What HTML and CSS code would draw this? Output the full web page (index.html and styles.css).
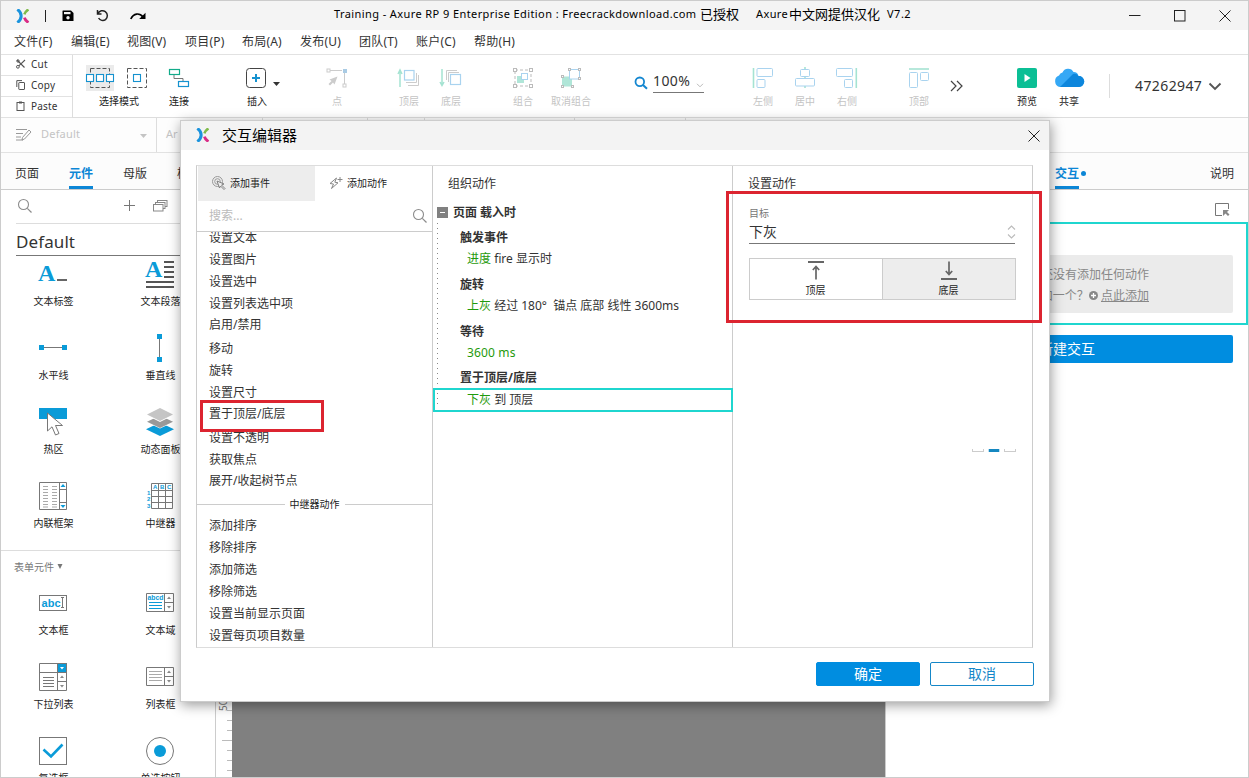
FILE: index.html
```html
<!DOCTYPE html>
<html lang="zh-CN">
<head>
<meta charset="utf-8">
<title>Axure RP 9</title>
<link rel="stylesheet" href="styles.css">
</head>
<body>
<svg class="defs" width="0" height="0">
  <defs>
    <symbol id="logo" viewBox="0 0 14 14"><path d="M1.400 .4C6.400 4.200 6.400 9.800 1.400 13.600" fill="none" stroke="#1a93dd" stroke-width="3"/><path d="M12.400 .4C10.400 1.800 9 3.200 8.400 5.400" fill="none" stroke="#7fbb4a" stroke-width="2.600"/><path d="M8.400 8.600C9 10.800 10.400 12.200 12.400 13.600" fill="none" stroke="#d92c86" stroke-width="2.800"/></symbol>
    <symbol id="search" viewBox="0 0 16 16"><circle cx="6.500" cy="6.500" r="5" fill="none" stroke="#8c8c8c" stroke-width="1.100"/><path d="M10.300 10.300L14.500 14.500" stroke="#8c8c8c" stroke-width="1.200"/></symbol>
    <symbol id="more" viewBox="0 0 13 12"><path d="M1 1L6 6L1 11M7 1L12 6L7 11" fill="none" stroke="#444" stroke-width="1.200"/></symbol>
    <symbol id="close" viewBox="0 0 12 12"><path d="M.5 .5L11.500 11.500M11.500 .5L.5 11.500" stroke="#222" stroke-width="1"/></symbol>
  </defs>
</svg>
<div class="app">
  <header class="titlebar">
    <svg class="tb-logo" width="14" height="14"><use href="#logo"/></svg>
    <i class="tb-bar"></i>
    <svg class="tb-save" width="12" height="12" viewBox="0 0 12 12"><path d="M1 .5H9L11.500 3V11H1Q.5 11 .5 10.500V1Q.5 .5 1 .5Z" fill="#000"/><rect x="2" y="2" width="6.500" height="2.200" fill="#f4f4f4"/><circle cx="6" cy="7.800" r="1.700" fill="#f4f4f4"/></svg>
    <svg class="tb-undo" width="13" height="13" viewBox="0 0 13 13"><path d="M1.500 1V5H5.500M1.800 4.800C3.300 1.500 7 .9 9.300 2.600C12 4.700 12 8.500 9.500 10.600C7.300 12.200 4 11.600 2.600 9" fill="none" stroke="#222" stroke-width="1.500"/></svg>
    <svg class="tb-redo" width="16" height="8" viewBox="0 0 16 8"><path d="M.8 7C3.500 1 9.500 .5 13 5" fill="none" stroke="#000" stroke-width="1.700"/><path d="M15.500 .8V7H9.200Z" fill="#000"/></svg>
    <div class="tb-title"><span class="t1">Training - Axure RP 9 Enterprise Edition : Freecrackdownload.com</span><span class="t2">已授权</span><span class="t3">Axure</span><span class="t4">中文网提供汉化</span><span class="t5">V7.2</span></div>
    <div class="win">
      <svg width="12" height="12" viewBox="0 0 12 12"><path d="M0 5.500H11.500" stroke="#222"/></svg>
      <svg width="12" height="12" viewBox="0 0 12 12"><rect x=".5" y=".5" width="10.500" height="10.500" fill="none" stroke="#222"/></svg>
      <svg width="12" height="12"><use href="#close"/></svg>
    </div>
  </header>
  <nav class="menubar"><span>文件(F)</span><span>编辑(E)</span><span>视图(V)</span><span>项目(P)</span><span>布局(A)</span><span>发布(U)</span><span>团队(T)</span><span>账户(C)</span><span>帮助(H)</span></nav>
  <section class="toolbar">
    <div class="clip">
      <div><svg width="10" height="10" viewBox="0 0 10 10"><path d="M1 1L8.500 8.500M9 1L2.800 6.800" stroke="#555" stroke-width="1.100"/><circle cx="1.900" cy="7.800" r="1.400" fill="none" stroke="#555"/><circle cx="2" cy="2" r="1.200" fill="none" stroke="#555"/></svg>Cut</div>
      <div><svg width="10" height="10" viewBox="0 0 10 10"><path d="M.8 7V.6H6" fill="none" stroke="#555"/><rect x="2.800" y="2.500" width="5.700" height="7" rx=".5" fill="none" stroke="#555"/></svg>Copy</div>
      <div><svg width="10" height="10" viewBox="0 0 10 10"><rect x="1" y="1.500" width="7" height="8" fill="none" stroke="#555"/><path d="M3 1.500H6" stroke="#555" stroke-width="2"/></svg>Paste</div>
    </div>
    <div class="tool sel"><svg width="64" height="26" viewBox="0 0 64 26"><rect width="28" height="26" fill="#ebebeb"/><rect x="4.500" y="3.500" width="19" height="19" fill="none" stroke="#555" stroke-dasharray="4 2"/><g fill="#fff" stroke="#1592cf" stroke-width="1.100"><rect x=".5" y="9.500" width="7" height="7"/><rect x="10.500" y="9.500" width="7" height="7"/><rect x="20.500" y="9.500" width="7" height="7"/></g><rect x="41.500" y="3.500" width="19" height="19" fill="none" stroke="#555" stroke-dasharray="4 2"/><rect x="47.500" y="9.500" width="7" height="7" fill="none" stroke="#1592cf" stroke-width="1.100"/></svg><b>选择模式</b></div>
    <div class="tool"><svg width="22" height="22" viewBox="0 0 22 22"><path d="M6 8V11.500H15V14" fill="none" stroke="#777"/><rect x="1.500" y="2.500" width="10" height="5" fill="none" stroke="#12ab8a" stroke-width="1.200"/><rect x="10.500" y="14.500" width="10" height="5" fill="none" stroke="#1592cf" stroke-width="1.200"/></svg><b>连接</b></div>
    <div class="tool ins"><svg width="22" height="22" viewBox="0 0 22 22"><rect x=".5" y="1.500" width="19" height="19" rx="3" fill="none" stroke="#444"/><path d="M10 7V15M6 11H14" stroke="#1592cf" stroke-width="2"/><path d="M27 15H34L30.500 19Z" fill="#333"/></svg><b>插入</b></div>
    <div class="tool off pt"><svg width="22" height="22" viewBox="0 0 22 22"><path d="M4 3.500H16M18.500 6V17" stroke="#ccc"/><rect x="1" y="2" width="3" height="3" fill="none" stroke="#ccc"/><rect x="17" y="2" width="4" height="4" fill="#a9cbe4"/><rect x="17" y="17" width="3" height="3" fill="none" stroke="#ccc"/><path d="M11.500 9.500L3.500 12.500L5.500 14L2.500 17L4 18.500L7 15.500L8.500 17.500Z" fill="#ccc"/></svg><b>点</b></div>
    <div class="tool off top"><svg width="22" height="22" viewBox="0 0 22 22"><path d="M2 20V4M0 7L2 3L4 7" fill="none" stroke="#a5e3d2" stroke-width="1.500"/><path d="M20.500 8V18.500H10M18.500 6V15.500H8" fill="none" stroke="#ccc"/><rect x="6.500" y="3.500" width="9.500" height="9.500" fill="#fff" stroke="#a9d3ef" stroke-width="1.200"/></svg><b>顶层</b></div>
    <div class="tool off"><svg width="22" height="22" viewBox="0 0 22 22"><path d="M2 2V18M0 15L2 18.500L4 15" fill="none" stroke="#a5e3d2" stroke-width="1.500"/><path d="M6.500 13V3.500H17M8.500 15V5.500H19" fill="none" stroke="#ccc"/><rect x="10.500" y="7.500" width="10" height="10" fill="#fff" stroke="#a9d3ef" stroke-width="1.200"/></svg><b>底层</b></div>
    <div class="tool wide off grp"><svg width="22" height="22" viewBox="0 0 22 22"><rect x="3" y="3" width="16" height="16" fill="none" stroke="#bbb" stroke-dasharray="3 2"/><g fill="#fff" stroke="#bbb"><rect x="1.500" y="1.500" width="3" height="3"/><rect x="17.500" y="1.500" width="3" height="3"/><rect x="1.500" y="17.500" width="3" height="3"/><rect x="17.500" y="17.500" width="3" height="3"/></g><rect x="5" y="9" width="7" height="7" fill="#b0e6d8"/><rect x="9.500" y="6.500" width="6" height="6" fill="#fff" stroke="#a9d3ef"/></svg><b>组合</b></div>
    <div class="tool wide off"><svg width="22" height="22" viewBox="0 0 22 22"><rect x="2" y="9.500" width="10" height="10" fill="#b0e6d8"/><rect x="9.500" y="2.500" width="10" height="9.500" fill="#fff" stroke="#a9d3ef"/><g fill="#fff" stroke="#bbb"><rect x="8.500" y="1.500" width="2" height="2"/><rect x="18.500" y="1.500" width="2" height="2"/><rect x="18.500" y="10.500" width="2" height="2"/><rect x="1.500" y="8.500" width="2" height="2"/><rect x="1.500" y="18.500" width="2" height="2"/><rect x="11.500" y="18.500" width="2" height="2"/></g></svg><b>取消组合</b></div>
    <div class="zoom"><svg width="14" height="14" viewBox="0 0 14 14"><circle cx="5.800" cy="5.800" r="4.300" fill="none" stroke="#1587d0" stroke-width="1.800"/><path d="M9 9L13 12.800" stroke="#1587d0" stroke-width="2"/></svg><div class="zoomval"><span>100%</span><svg width="8" height="5" viewBox="0 0 8 5"><path d="M1 .8L4 3.800L7 .8" fill="none" stroke="#bbb"/></svg></div></div>
    <div class="tool off al"><svg width="22" height="22" viewBox="0 0 22 22"><path d="M1.500 1V21" stroke="#a5e3d2" stroke-width="1.600"/><g fill="none" stroke="#a9d3ef"><rect x="5" y="1.500" width="15.500" height="8" rx="1"/><rect x="5" y="12.500" width="8" height="8" rx="1"/></g></svg><b>左侧</b></div>
    <div class="tool off"><svg width="22" height="22" viewBox="0 0 22 22"><path d="M11 0V3M11 9V12M11 19V21" stroke="#a5e3d2" stroke-width="1.600"/><g fill="none" stroke="#a9d3ef"><rect x="6.500" y="2.500" width="9" height="7" rx="1"/><rect x="1.500" y="11.500" width="19" height="7.500" rx="1"/></g></svg><b>居中</b></div>
    <div class="tool off"><svg width="22" height="22" viewBox="0 0 22 22"><path d="M20.300 1V21" stroke="#a5e3d2" stroke-width="1.600"/><g fill="none" stroke="#a9d3ef"><rect x=".5" y="1.500" width="16" height="8" rx="1"/><rect x="8.500" y="12.500" width="8" height="8" rx="1"/></g></svg><b>右侧</b></div>
    <div class="tool off at"><svg width="22" height="22" viewBox="0 0 22 22"><path d="M1 2H21" stroke="#a5e3d2" stroke-width="1.600"/><g fill="none" stroke="#a9d3ef"><rect x="1.500" y="5.500" width="8" height="15" rx="1"/><rect x="12.500" y="5.500" width="8" height="8" rx="1"/></g></svg><b>顶部</b></div>
    <svg class="more1" width="13" height="12"><use href="#more"/></svg>
    <div class="tool pv"><svg width="22" height="22" viewBox="0 0 22 22"><rect x="1" y="1" width="20" height="20" rx="2" fill="#0bbf95"/><path d="M8.500 7L14.500 11L8.500 15Z" fill="#fff"/></svg><b>预览</b></div>
    <div class="tool"><svg width="30" height="22" viewBox="0 0 30 22"><path d="M6 20A6 6 0 0 1 5 8.500A5 5 0 0 1 8.500 5.500A6 6 0 0 1 19.500 5A5 5 0 0 1 24.500 9A5.500 5.500 0 0 1 25 20Z" fill="#35a8f5"/><path d="M6 20L19 7A5 5 0 0 1 24.500 9A5.500 5.500 0 0 1 25 20Z" fill="#0d86dc"/></svg><b>共享</b></div>
    <i class="tdiv"></i>
    <div class="account"><span>47262947</span><svg width="14" height="9" viewBox="0 0 14 9"><path d="M1.500 1.500L7 7L12.500 1.500" fill="none" stroke="#555" stroke-width="1.900"/></svg></div>
  </section>
  <section class="format">
    <div class="style"><svg width="16" height="13" viewBox="0 0 16 13"><path d="M0 1.500H11M0 5.500H7M0 9H5M0 12H7" stroke="#999"/><path d="M6.500 9.500L13 2L15 4L8.500 11L6 12Z" fill="none" stroke="#999"/></svg><span>Default</span><svg class="caret" width="7" height="4" viewBox="0 0 7 4"><path d="M0 0H7L3.500 4Z" fill="#c4c4c4"/></svg></div>
    <div class="f1">Ar</div><i class="f2"></i><i class="f3"></i><i class="f4"></i><i class="f5"></i><i class="f6"></i>
    <i class="fline"></i><span class="h">H</span>
    <svg class="eye" width="15" height="10" viewBox="0 0 15 10"><path d="M.7 5Q7.500 -4 14.300 5Q7.500 14 .7 5Z" fill="none" stroke="#ddd"/><circle cx="7.500" cy="5" r="2.300" fill="none" stroke="#ddd"/></svg>
    <svg class="more2" width="13" height="12"><use href="#more"/></svg>
  </section>
  <main class="work">
    <aside class="left">
      <div class="tabs"><span>页面</span><span class="on">元件</span><span>母版</span><span>样式</span></div>
      <div class="lsearch"><svg width="16" height="16"><use href="#search"/></svg><svg class="plus" width="11" height="11" viewBox="0 0 11 11"><path d="M5.500 0V11M0 5.500H11" stroke="#777"/></svg><svg width="15" height="12" viewBox="0 0 15 12"><g fill="#fff" stroke="#888"><rect x="4.500" y=".5" width="9.500" height="6"/><rect x="2.500" y="2.500" width="9.500" height="6"/><rect x=".5" y="4.500" width="9.500" height="6.500"/></g></svg></div>
      <h2>Default</h2>
      <div class="lib g1">
        <div><svg width="28" height="28" viewBox="0 0 28 28"><text x="-1" y="21" class="serifa">A</text><path d="M18 20H28" stroke="#666" stroke-width="2"/></svg><b>文本标签</b></div>
        <div><svg width="28" height="28" viewBox="0 0 28 28"><text x="-1" y="17" class="serifa">A</text><path d="M18 2H28M18 7H28M18 12H28M18 17H28M0 22H28M0 27H28" stroke="#555" stroke-width="2"/></svg><b>文本段落</b></div>
        <div><svg width="28" height="28" viewBox="0 0 28 28"><path d="M2 13.500H26" stroke="#777"/><path d="M0 11H5V16H0ZM23 11H28V16H23Z" fill="#0a9bd8"/></svg><b>水平线</b></div>
        <div><svg width="28" height="28" viewBox="0 0 28 28"><path d="M13.500 2V26" stroke="#777"/><path d="M11 0H16V5H11ZM11 23H16V28H11Z" fill="#0a9bd8"/></svg><b>垂直线</b></div>
        <div><svg width="28" height="28" viewBox="0 0 28 28"><rect width="28" height="11" fill="#0a9bd8"/><path d="M8.500 5V23L13 18.800L16.500 27L20 25.500L16.500 17.500H23.500Z" fill="#fff" stroke="#777"/></svg><b>热区</b></div>
        <div><svg width="28" height="28" viewBox="0 0 28 28"><path d="M14 14.500L28 21.300L14 28L0 21.300Z" fill="#0a9bd8"/><path d="M14 7.500L28 14L14 20.500L0 14Z" fill="#fff"/><path d="M14 7.500L27 13.700L14 20L1 13.700Z" fill="#999"/><path d="M14 0L28 7L14 14L0 7Z" fill="#fff"/><path d="M14 0L27 6.500L14 13L1 6.500Z" fill="#c5c5c5"/></svg><b>动态面板</b></div>
        <div><svg width="28" height="28" viewBox="0 0 28 28"><path d="M.5 .5H27.500V27.500H.5ZM20.500 .5V27.500M20.500 7.500H27.500M20.500 20.500H27.500" fill="none" stroke="#777"/><path d="M21.500 5L24 2L26.500 5ZM21.500 23L24 26L26.500 23Z" fill="#0a9bd8"/><path d="M4 4.500H18M4 7.500H18M4 10.500H18M4 13.500H18M4 16.500H18M4 19.500H18M4 22.500H18M4 25H18" stroke="#aaa" stroke-dasharray="5 4"/></svg><b>内联框架</b></div>
        <div><svg width="28" height="28" viewBox="0 0 28 28"><path d="M5.500 1.500H26.500V26.500H5.500ZM12.500 1.500V26.500M19.500 1.500V26.500M5.500 8.500H26.500M5.500 14.500H26.500M5.500 20.500H26.500" fill="none" stroke="#777"/><g class="mini"><text x="7" y="7">A</text><text x="14" y="7">B</text><text x="21" y="7">C</text><text x="1" y="13">1</text><text x="1" y="19">2</text><text x="1" y="26">3</text></g></svg><b>中继器</b></div>
      </div>
      <h3>表单元件<svg width="6" height="5" viewBox="0 0 6 5"><path d="M.5 0H5.500L3 5Z" fill="#777"/></svg></h3>
      <div class="lib g2">
        <div><svg width="28" height="28" viewBox="0 0 28 28"><rect x=".5" y="6.500" width="27" height="15" fill="none" stroke="#777"/><text x="2.500" y="18" class="abc" textLength="19">abc</text><path d="M22 8.500H25M23.500 8.500V18.500M22 18.500H25" stroke="#777"/></svg><b>文本框</b></div>
        <div><svg width="28" height="28" viewBox="0 0 28 28"><path d="M.5 4.500H27.500V22.500H.5ZM18.500 4.500V22.500M18.500 13.500H27.500" fill="none" stroke="#777"/><text x="1.500" y="11" class="abcd" textLength="16" lengthAdjust="spacingAndGlyphs">abcd</text><path d="M3 13.500H16M3 16.500H16M3 19.500H16" stroke="#0a9bd8"/><path d="M21 10L23 7.500L25 10ZM21 17L23 19.500L25 17Z" fill="#888"/></svg><b>文本域</b></div>
        <div><svg width="28" height="28" viewBox="0 0 28 28"><rect x="18" y="0" width="10" height="9" fill="#0a9bd8"/><path d="M.5 .5H27.500V27.500H.5ZM.5 9.500H27.500M18.500 .5V27.500M18.500 18.500H27.500" fill="none" stroke="#777"/><path d="M21 4H25L23 6.500Z" fill="#fff"/><path d="M4 14.500H15M4 17.500H15M4 20.500H15M4 23.500H15" stroke="#777"/><path d="M21 15L23 12.500L25 15ZM21 22L23 24.500L25 22Z" fill="#888"/></svg><b>下拉列表</b></div>
        <div><svg width="28" height="28" viewBox="0 0 28 28"><path d="M.5 4.500H27.500V22.500H.5ZM18.500 4.500V22.500M18.500 13.500H27.500" fill="none" stroke="#777"/><path d="M3 8.500H16M3 11.500H16M3 14.500H16M3 17.500H16" stroke="#aaa"/><path d="M21 10L23 7.500L25 10ZM21 17L23 19.500L25 17Z" fill="#888"/></svg><b>列表框</b></div>
        <div><svg width="28" height="28" viewBox="0 0 28 28"><rect x=".5" y=".5" width="27" height="27" fill="none" stroke="#777"/><path d="M4.500 12.500L12 19.500L23.500 7.500" fill="none" stroke="#0a9bd8" stroke-width="2.600"/></svg><b>复选框</b></div>
        <div><svg width="28" height="28" viewBox="0 0 28 28"><circle cx="14" cy="14" r="13.500" fill="none" stroke="#777"/><circle cx="14" cy="14" r="6" fill="#0a9bd8"/></svg><b>单选按钮</b></div>
      </div>
    </aside>
    <div class="ruler"><span>500</span></div>
    <div class="canvas"></div>
    <aside class="right">
      <div class="tabs"><span class="on">交互</span><i></i><span class="note">说明</span></div>
      <div class="rpick"><svg width="15" height="14" viewBox="0 0 15 14"><path d="M7 12.500H.5V.5H13.500V6" fill="none" stroke="#777"/><path d="M8 7H14L12 9L14.500 11.500L13 13L10.500 10.500L8 13Z" fill="#888"/></svg></div>
      <div class="case"><div class="empty"><p>还没有添加任何动作</p><p>添加一个？<svg width="9" height="9" viewBox="0 0 9 9"><circle cx="4.500" cy="4.500" r="4.500" fill="#888"/><path d="M4.500 2V7M2 4.500H7" stroke="#fff" stroke-width="1.300"/></svg> <u>点此添加</u></p></div></div>
      <div class="newbtn">新建交互</div>
    </aside>
  </main>

  <div class="dialog">
    <div class="dhead"><svg width="14" height="14"><use href="#logo"/></svg><span>交互编辑器</span><svg class="x" width="12" height="12"><use href="#close"/></svg></div>
    <div class="dbody">
      <div class="c1">
        <div class="dtabs"><div class="act"><svg width="14" height="14" viewBox="0 0 14 14"><circle cx="5.500" cy="5.500" r="5" fill="none" stroke="#999"/><circle cx="5.500" cy="5.500" r="2.800" fill="none" stroke="#999"/><path d="M5 5L12 8L9.500 9L13 12.500L12 13.500L8.500 10L7.500 12Z" fill="#eee" stroke="#777" stroke-width=".9"/></svg>添加事件</div><div><svg width="14" height="14" viewBox="0 0 14 14"><path d="M7.500 2L1 7.500L4.500 8L2.500 12.500L9 6.800L5.800 6.200Z" fill="none" stroke="#888"/><path d="M11 1V6M8.500 3.500H13.500" stroke="#888"/></svg>添加动作</div></div>
        <div class="dsearch"><span>搜索...</span><svg width="16" height="16"><use href="#search"/></svg></div>
        <div class="list">
          <p>设置文本</p><p>设置图片</p><p>设置选中</p><p>设置列表选中项</p><p class="s">启用/禁用</p><p>移动</p><p>旋转</p><p>设置尺寸</p><p class="s">置于顶层/底层</p><p>设置不透明</p><p>获取焦点</p><p class="s">展开/收起树节点</p>
          <div class="sep">中继器动作</div>
          <p>添加排序</p><p>移除排序</p><p>添加筛选</p><p>移除筛选</p><p>设置当前显示页面</p><p>设置每页项目数量</p>
        </div>
      </div>
      <div class="c2">
        <div class="ctitle">组织动作</div>
        <div class="root"><i></i><span>页面 载入时</span></div>
        <div class="tree">
          <div class="n a1">触发事件</div><div class="v b1"><em>进度</em> fire 显示时</div>
          <div class="n a2">旋转</div><div class="v b2"><em>上灰</em> 经过 180°&nbsp; 锚点 底部 线性 3600ms</div>
          <div class="n a2">等待</div><div class="v b3"><em>3600 ms</em></div>
          <div class="n a4">置于顶层/底层</div><div class="v cur"><em>下灰</em> 到 顶层</div>
        </div>
      </div>
      <div class="c3">
        <div class="ctitle">设置动作</div>
        <label>目标</label>
        <div class="target"><span>下灰</span><svg width="9" height="14" viewBox="0 0 9 14"><path d="M1 4.500L4.500 1L8 4.500M1 9.500L4.500 13L8 9.500" fill="none" stroke="#bbb" stroke-width="1.100"/></svg></div>
        <div class="seg"><div><svg width="16" height="19" viewBox="0 0 16 19"><path d="M0 1H16" stroke="#666" stroke-width="2"/><path d="M8 18.500V6M4.800 9L8 5.500L11.200 9" fill="none" stroke="#666" stroke-width="1.700"/></svg>顶层</div><div class="act"><svg width="16" height="19" viewBox="0 0 16 19"><path d="M0 18H16" stroke="#666" stroke-width="2"/><path d="M8 .5V13M4.800 10L8 13.500L11.200 10" fill="none" stroke="#666" stroke-width="1.700"/></svg>底层</div></div>
        <div class="bits"><i></i><i class="on"></i><i></i></div>
      </div>
    </div>
    <div class="dfoot"><button class="ok">确定</button><button>取消</button></div>
    <div class="mark m1"></div>
    <div class="mark m2"></div>
  </div>
</div>
</body>
</html>
```
FILE: styles.css
```css
* { box-sizing: border-box; margin: 0; padding: 0; }
body { width: 1249px; height: 778px; overflow: hidden; font: 12px/16px "Noto Sans", "Noto Sans CJK SC", sans-serif; color: #333; background: #fff; }
i, em { font-style: normal; }
svg { display: block; flex: none; overflow: visible; }
.defs { position: absolute; }
.app { position: relative; display: flex; flex-direction: column; width: 1249px; height: 778px; border: 1px solid #ccc; overflow: hidden; background: #fff; }

.titlebar { display: flex; align-items: center; flex: none; height: 29px; background: #f4f4f4; color: #000; }
.tb-logo { margin-left: 15px; }
.tb-bar { width: 1px; height: 12px; margin-left: 15px; background: #222; }
.tb-save { margin-left: 16px; }
.tb-undo { margin-left: 22px; }
.tb-redo { margin-left: 21px; }
.tb-title { display: flex; align-items: center; margin-left: 188px; width: 580px; white-space: nowrap; font-size: 11px; line-height: 16px; height: 18px; margin-bottom: 3px; }
.t1 { width: 366px; letter-spacing: .41px; }
.t2 { width: 56px; font-size: 13px; }
.t3 { width: 33px; letter-spacing: .4px; }
.t4 { width: 98px; font-size: 13px; }
.t5 { letter-spacing: .5px; }
.win { display: flex; gap: 33px; margin-left: auto; margin-right: 17px; }

.menubar { display: flex; flex: none; height: 25px; padding-left: 13px; border-bottom: 1px solid #e2e2e2; line-height: 24px; }
.menubar span { width: 57px; white-space: nowrap; letter-spacing: .2px; }
.menubar span:nth-child(2) { width: 56px; }
.menubar span:nth-child(3), .menubar span:nth-child(5) { width: 58px; }
.menubar span:nth-child(6) { width: 59px; }
.menubar span:nth-child(8) { width: 58px; }

.toolbar { display: flex; flex: none; height: 63px; border-bottom: 1px solid #ddd; }
.clip { width: 72px; border-right: 1px solid #ddd; font-size: 10px; }
.clip div { display: flex; align-items: center; gap: 5px; height: 21px; padding: 0 0 3px 15px; border-bottom: 1px solid #e2e2e2; letter-spacing: .2px; }
.tool { display: flex; flex-direction: column; align-items: center; flex: none; width: 42px; padding-top: 12px; white-space: nowrap; }
.tool svg { margin-bottom: 5px; }
.tool b { font-weight: 400; font-size: 10px; line-height: 14px; color: #222; }
.tool.off b { color: #c4c4c4; }
.sel { width: 78px; margin-left: 7px; padding-top: 10px; }
.tool.sel svg { margin-bottom: 3px; margin-right: 2px; }
.ins { margin-left: 36px; }
.pt { margin-left: 38px; }
.top { margin-left: 30px; }
.wide { width: 48px; }
.grp { margin-left: 27px; }
.zoom { display: flex; align-items: flex-start; width: 70px; margin-left: 39px; padding-top: 15px; flex: none; }
.zoom > svg { margin-top: 6px; }
.zoomval { display: flex; width: 51px; height: 23px; margin-left: 5px; border-bottom: 1px solid #777; font-size: 14px; line-height: 22px; letter-spacing: .4px; justify-content: space-between; }
.zoomval svg { margin-top: 13px; }
.al { margin-left: 38px; }
.at { margin-left: 30px; }
.more1 { margin: 25px 0 0 10px; }
.pv { margin-left: 43px; }
.tdiv { width: 1px; height: 24px; margin: 19px 0 0 19px; background: #ddd; }
.account { display: flex; align-items: center; gap: 6px; height: 24px; margin: 19px 0 0 25px; font-size: 14px; letter-spacing: .4px; }

.format { display: flex; align-items: center; flex: none; height: 35px; border-bottom: 1px solid #e2e2e2; background: #fdfdfd; color: #c4c4c4; font-size: 11px; }
.style { display: flex; align-items: center; width: 156px; height: 34px; padding: 0 0 2px 15px; border-right: 1px solid #ddd; }
.style span { margin-left: 9px; letter-spacing: .2px; }
.style .caret { margin: 4px 9px 0 auto; }
.f1 { width: 105px; padding: 0 0 2px 9px; }
.format .f2, .format .f3, .format .f4, .format .f5, .format .f6 { height: 34px; border-left: 1px solid #ddd; }
.f2 { width: 105px; } .f3 { width: 57px; } .f4 { width: 150px; } .f5 { width: 111px; } .f6 { width: 170px; }
.fline { width: 52px; height: 18px; border-bottom: 1px solid #bbb; }
.h { margin-left: 1px; width: 18px; font-size: 9px; color: #333; }
.more2 { margin-left: 17px; }

.work { display: flex; flex: 1; min-height: 0; }
.left { width: 215px; border-right: 1px solid #ccc; flex: none; overflow: hidden; }
.tabs { display: flex; height: 37px; border-bottom: 1px solid #ccc; background: #fcfcfc; line-height: 42px; }
.tabs span { height: 36px; white-space: nowrap; }
.tabs .on { color: #0c86d6; font-weight: 700; border-bottom: 3px solid #0c86d6; }
.left .tabs { gap: 30px; padding-left: 14px; }
.lsearch { display: flex; align-items: center; height: 34px; margin-left: 15px; padding: 0 0 2px 1px; border-bottom: 1px solid #ddd; }
.lsearch .plus { margin: 0 18px 0 91px; }
h2 { height: 32px; margin-left: 15px; border-bottom: 1px solid #777; font-weight: 400; font-size: 17px; line-height: 36px; letter-spacing: .1px; }
.lib { display: grid; grid-template-columns: 107px 107px; grid-auto-rows: 74px; margin-left: -1px; }
.lib div { display: flex; flex-direction: column; align-items: center; padding-top: 4px; white-space: nowrap; }
.lib svg { margin-right: 2px; }
.g1 { height: 295px; border-bottom: 1px solid #ddd; }
.lib b { margin-top: 6px; font-weight: 400; font-size: 10px; line-height: 15px; color: #222; }
.serifa { font: 700 24px "Liberation Serif", serif; fill: #0a9bd8; }
.mini { font: 700 6px "Liberation Sans", sans-serif; fill: #0a9bd8; }
.abc { font: 700 11px "Liberation Sans", sans-serif; fill: #0a9bd8; }
.abcd { font: 700 7px "Liberation Sans", sans-serif; fill: #0a9bd8; }
h3 { display: flex; gap: 3px; height: 34px; padding: 8px 0 0 13px; font-weight: 400; font-size: 10px; color: #777; }
h3 svg { margin-top: 5px; }
.ruler { width: 16px; flex: none; padding-top: 512px; background: linear-gradient(#bbb, #bbb) 6px 587px / 10px 1px no-repeat, repeating-linear-gradient(transparent 0 7px, #bbb 7px 8px, transparent 8px 10px) 11px 0 / 5px 100% no-repeat, #fff; color: #777; }
.ruler span { display: block; height: 46px; writing-mode: vertical-rl; transform: rotate(180deg); font: 10px/14px "Noto Sans", sans-serif; }
.canvas { width: 653px; flex: none; background: #808080; }
.right { flex: 1; border-left: 1px solid #ccc; }
.right .tabs { padding: 0 14px 0 169px; }
.right .tabs i { width: 5px; height: 5px; margin: 18px 0 0 2px; border-radius: 50%; background: #0c86d6; }
.right .tabs .note { margin-left: auto; }
.rpick { display: flex; justify-content: flex-end; height: 32px; padding: 13px 18px 0 0; }
.case { height: 103px; padding: 31px 13px 10px 14px; border: 2px solid #1fd6cf; }
.empty { height: 58px; padding: 9px 84px 0 0; background: #ebebeb; border-radius: 2px; text-align: right; color: #888; line-height: 21px; }
.empty svg { display: inline-block; vertical-align: 0; }
.newbtn { height: 28px; margin: 10px 15px 0 14px; background: #008de0; border-radius: 2px; color: #fff; font-size: 14px; line-height: 28px; padding-left: 139px; }

.dialog { position: absolute; left: 179px; top: 119px; width: 870px; height: 582px; border: 1px solid #ccc; background: #fff; box-shadow: 1px 3px 12px rgba(0, 0, 0, .4); }
.dhead { display: flex; align-items: center; height: 29px; padding: 0 9px 0 15px; background: #f3f3f3; color: #000; font-size: 15px; }
.dhead > svg:first-child { margin-bottom: 1px; }
.dhead span { margin: 0 0 2px 12px; }
.dhead .x { margin-left: auto; }
.dbody { display: flex; width: 837px; height: 483px; margin: 15px 0 0 15px; border: 1px solid #ddd; border-left-color: #ccc; border-right-color: #ccc; }
.c1 { width: 236px; flex: none; border-right: 1px solid #ccc; overflow: hidden; }
.dtabs { display: flex; height: 35px; padding-left: 1px; font-size: 10px; }
.dtabs div { display: flex; align-items: center; gap: 4px; width: 117px; padding: 0 0 2px 14px; color: #222; }
.dtabs .act { background: #ededed; }
.dsearch { display: flex; align-items: center; justify-content: space-between; height: 31px; padding: 0 4px 0 12px; border-bottom: 1px solid #ccc; color: #bbb; }
.list { height: 415px; overflow: hidden; }
.list p { height: 22px; padding-left: 12px; line-height: 22px; }
.list p:first-child { margin-top: -5px; }
.list .s { margin-top: -1px; margin-bottom: 2px; }
.list .sep { display: flex; align-items: center; gap: 5px; height: 22px; margin: -1px 0 0; font-size: 10px; color: #222; }
.sep::before, .sep::after { content: ""; flex: 1; height: 1px; background: #ccc; }
.c2 { width: 300px; flex: none; border-right: 1px solid #ccc; }
.ctitle { height: 35px; padding-left: 15px; line-height: 35px; }
.root { display: flex; align-items: center; gap: 5px; height: 22px; padding-left: 4px; font-weight: 700; }
.root span { padding-top: 2px; }
.root i { width: 11px; height: 11px; background: linear-gradient(#fff, #fff) center / 5px 1px no-repeat #808080; }
.tree { height: 189px; background: repeating-linear-gradient(#888 0 1px, transparent 1px 5px) 4px 0 / 1px 182px no-repeat; }
.n { height: 22px; padding-left: 27px; font-weight: 700; line-height: 24px; }
.v { height: 22px; padding-left: 34px; line-height: 22px; white-space: pre; }
.v em { color: #1f9a0d; }
.b3 { letter-spacing: .15px; }
.a1 { padding-top: 3px; height: 25px; }
.a2 { margin-top: 3px; }
.a4 { margin-top: 2px; line-height: 23px; }
.cur { height: 24px; border: 2px solid #1fd6cf; padding-left: 32px; line-height: 20px; margin-right: -1px; }
.c3 { flex: 1; }
.c3 label { display: block; margin-top: 4px; padding-left: 16px; font-size: 10px; color: #777; }
.target { display: flex; justify-content: space-between; align-items: center; width: 266px; height: 23px; margin-left: 16px; border-bottom: 1px solid #777; font-size: 14px; }
.target svg { margin-right: -1px; }
.seg { display: flex; width: 267px; height: 42px; margin: 14px 0 0 16px; border: 1px solid #ccc; font-size: 10px; line-height: 14px; color: #222; }
.seg div { display: flex; flex-direction: column; align-items: center; gap: 3px; flex: 1; padding: 2px 1px 0 0; }
.seg .act { background: #ededed; border-left: 1px solid #ccc; }
.bits { display: flex; gap: 4px; margin: 149px 0 0 239px; }
.bits i { width: 12px; height: 3px; border: 1px solid #ccc; border-top: 0; }
.bits .on { border: 0; border-left: 1px solid #bcdff2; border-right: 1px solid #bcdff2; background: #1587c0; }
.dfoot { display: flex; justify-content: flex-end; gap: 10px; margin: 14px 15px 0 0; }
button { width: 104px; height: 24px; border: 1px solid #1587c8; border-radius: 2px; background: #fff; color: #1587c8; font: 14px/20px "Noto Sans", "Noto Sans CJK SC", sans-serif; }
.ok { background: #008de0; border-color: #008de0; color: #fff; }
.mark { position: absolute; border: 3px solid #dc2430; }
.m1 { left: 19px; top: 279px; width: 124px; height: 32px; }
.m2 { left: 545px; top: 70px; width: 316px; height: 132px; }
```
